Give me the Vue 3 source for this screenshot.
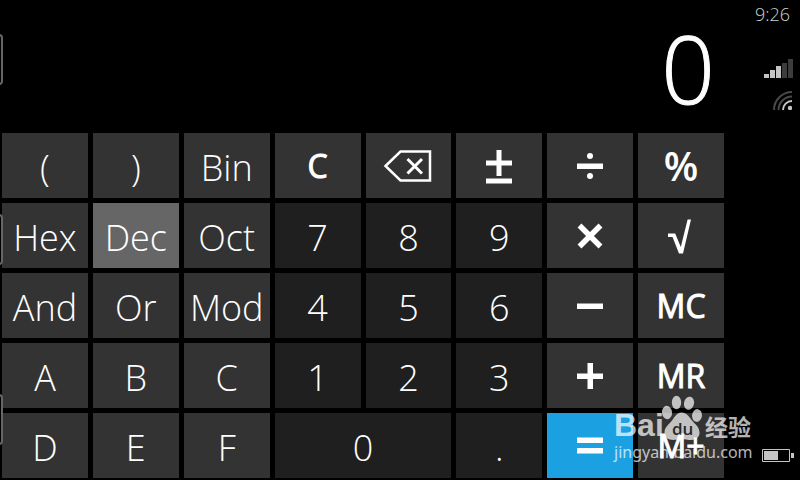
<script setup>
import { ref } from 'vue'

const mode = ref('Dec')
const display = ref('0')

const keys = [
  { t: '(' }, { t: ')' }, { t: 'Bin', mode: true }, { t: 'C', kind: 'strong', label: 'Clear' },
  { icon: 'back', label: 'Backspace' }, { icon: 'pm', label: 'Plus or minus' },
  { icon: 'div', label: 'Divide' }, { t: '%', kind: 'percent' },
  { t: 'Hex', mode: true }, { t: 'Dec', mode: true }, { t: 'Oct', mode: true },
  { t: '7', kind: 'digit' }, { t: '8', kind: 'digit' }, { t: '9', kind: 'digit' },
  { icon: 'mul', label: 'Multiply' }, { icon: 'sqrt', label: 'Square root' },
  { t: 'And' }, { t: 'Or' }, { t: 'Mod' },
  { t: '4', kind: 'digit' }, { t: '5', kind: 'digit' }, { t: '6', kind: 'digit' },
  { icon: 'minus', label: 'Subtract' }, { t: 'MC', kind: 'strong' },
  { t: 'A' }, { t: 'B' }, { t: 'C' },
  { t: '1', kind: 'digit' }, { t: '2', kind: 'digit' }, { t: '3', kind: 'digit' },
  { icon: 'plus', label: 'Add' }, { t: 'MR', kind: 'strong' },
  { t: 'D' }, { t: 'E' }, { t: 'F' },
  { t: '0', kind: 'digit', wide: true }, { t: '.', kind: 'digit' },
  { icon: 'eq', label: 'Equals', kind: 'equals' }, { t: 'M+', kind: 'strong' },
]

function press(key) {
  if (key.mode) mode.value = key.t
  else if (key.kind === 'digit') {
    display.value = display.value === '0' && key.t !== '.' ? key.t : display.value + key.t
  } else if (key.label === 'Clear') display.value = '0'
  else if (key.icon === 'back') display.value = display.value.slice(0, -1) || '0'
}
</script>

<template>
  <div class="phone">
    <main class="calc">
      <output class="display">{{ display }}</output>
      <div class="pad">
        <button
          v-for="(key, i) in keys"
          :key="i"
          type="button"
          class="key"
          :class="[key.kind, { wide: key.wide, active: key.mode && key.t === mode }]"
          :aria-label="key.label"
          @click="press(key)"
        >
          <svg v-if="key.icon" class="icon" viewBox="0 0 50 40" aria-hidden="true">
            <g v-if="key.icon === 'back'" fill="none" stroke="#fff">
              <path d="M2.5 20 17.5 5.5H47V34.500H17.500Z" stroke-width="2.500" />
              <path d="M24.500 13 39 27.500M39 13 24.500 27.500" stroke-width="3" />
            </g>
            <path v-else-if="key.icon === 'pm'" d="M22.500 4h5v10.500H38v5H27.500V30h-5V19.500H12v-5h10.500zM12 32.500h26v5H12z" fill="#fff" />
            <g v-else-if="key.icon === 'div'" fill="#fff">
              <path d="M12 17.500h26v5.500H12z" />
              <circle cx="25" cy="10" r="3" />
              <circle cx="25" cy="30" r="3" />
            </g>
            <path v-else-if="key.icon === 'mul'" d="M14.500 9.500 35.500 30.500M35.500 9.500 14.500 30.500" stroke="#fff" stroke-width="5.500" />
            <path v-else-if="key.icon === 'sqrt'" d="M12 17.500h7.200L24.800 31 31.600 3.500H35L27 37.500h-4L16.500 21H12z" fill="#fff" />
            <path v-else-if="key.icon === 'minus'" d="M12 17.500h26V23H12z" fill="#fff" />
            <path v-else-if="key.icon === 'plus'" d="M22.500 7h5.500v10.500h10V23H28v10h-5.500V23H12v-5.500h10.500z" fill="#fff" />
            <path v-else d="M12 11.500h26V17H12zM12 22h26v5.500H12z" fill="#fff" />
          </svg>
          <template v-else>{{ key.t }}</template>
        </button>
      </div>
    </main>

    <aside class="status">
      <time class="clock">9:26</time>
      <svg class="signal" viewBox="0 0 29 19" role="img" aria-label="Signal">
        <path d="M0 15h5v4H0zM6 11h5v8H6zM12 7h5v12h-5z" fill="#c4c4c4" />
        <path d="M18 4h5v15h-5zM24 0h5v19h-5z" fill="#3c3c3c" />
      </svg>
      <svg class="wifi" viewBox="0 0 19 19" role="img" aria-label="Wi-Fi">
        <g fill="none">
          <path d="M1 19A18 18 0 0 1 19 1M5.500 19A13.500 13.500 0 0 1 19 5.500" stroke="#4a4a4a" stroke-width="2" />
          <path d="M10 19A9 9 0 0 1 19 10" stroke="#c4c4c4" stroke-width="2" />
        </g>
        <circle cx="17" cy="17" r="2.200" fill="#c4c4c4" />
      </svg>
      <svg class="battery" viewBox="0 0 32 13" role="img" aria-label="Battery">
        <path d="M.5 .5h27v12H.5z" fill="none" stroke="#c4c4c4" />
        <path d="M2 2h14v9H2zM29 4h3v5h-3z" fill="#c4c4c4" />
      </svg>
    </aside>

    <div class="tabs" aria-hidden="true"><i></i><i></i><i></i></div>

    <div class="mark">
      <div class="brand">
        <span class="bai">Bai</span>
        <span class="paw">
          <svg viewBox="0 0 36 46" aria-hidden="true">
            <g fill="#fff">
              <ellipse cx="6" cy="17.500" rx="5" ry="6.700" transform="rotate(-6 6 17.500)" />
              <ellipse cx="15.500" cy="7.500" rx="4.700" ry="6.800" />
              <ellipse cx="28" cy="8.200" rx="5" ry="6.600" transform="rotate(12 28 8.200)" />
              <ellipse cx="36" cy="20.500" rx="5" ry="6.400" transform="rotate(6 36 20.500)" />
              <path d="M20.500 17.500C25.500 17.500 28.500 22 31 25.500 34.500 29.500 39 32.500 38.500 38.500 38 44.500 31 45.500 26.500 44.800 22 44.200 19 44.200 15 44.800 9 45.500 3.500 44 3.500 37.500 3.500 32 8 29.500 11 25.500 13.500 22 16 17.500 20.500 17.500Z" />
            </g>
          </svg>
          <b>du</b>
        </span>
        <span class="cn">经验</span>
      </div>
      <div class="url">jingyan.baidu.com</div>
    </div>
  </div>
</template>

<style>
body {
  background: #000;
}
</style>

<style scoped>
.phone {
  position: relative;
  display: flex;
  min-height: 100vh;
  overflow: hidden;
  background: #000;
  color: #fff;
  font-family: "Open Sans", "Noto Sans", sans-serif;
}
.calc {
  flex: 1;
  display: flex;
  flex-direction: column;
  padding: 0 0 2px 2px;
}
.display {
  flex: 1;
  padding: 4px 9px 0 0;
  text-align: right;
  font-size: 94px;
  line-height: 128px;
  font-weight: 300;
  -webkit-text-stroke: 1px #fff;
}
.pad {
  display: grid;
  grid-template-columns: repeat(8, minmax(0, 1fr));
  grid-auto-rows: 65px;
  gap: 5px;
}
.key {
  display: flex;
  align-items: center;
  justify-content: center;
  padding: 4px 0 0;
  border: 0;
  border-radius: 0;
  background: #333;
  color: #fff;
  font-family: inherit;
  font-size: 36px;
  line-height: 48px;
  font-weight: 300;
  white-space: nowrap;
}
.digit {
  background: #1f1f1f;
}
.active {
  background: #666;
}
.wide {
  grid-column: span 2;
}
.strong {
  padding: 0;
  font-size: 32px;
  font-weight: 400;
  -webkit-text-stroke: 1px #fff;
}
.percent {
  padding: 0;
  font-size: 40px;
  font-weight: 600;
}
.equals {
  background: #1ba1e2;
}
.icon {
  width: 50px;
  height: 40px;
  margin-bottom: 4px;
}
.status {
  display: flex;
  flex-direction: column;
  align-items: flex-end;
  width: 68px;
  padding: 0 8px 18px 0;
  box-sizing: content-box;
}
.clock {
  margin-right: 2px;
  color: #d0d0d0;
  font-size: 18px;
  line-height: 28px;
  font-weight: 300;
}
.signal {
  width: 29px;
  height: 19px;
  margin: 31px -1px 13px 0;
}
.wifi {
  width: 19px;
  height: 19px;
}
.battery {
  width: 32px;
  height: 13px;
  margin: auto -2px 0 0;
}
.tabs {
  position: absolute;
  top: 34px;
  left: -8px;
  display: flex;
  flex-direction: column;
  gap: 129px;
}
.tabs i {
  width: 11px;
  height: 51px;
  box-sizing: border-box;
  border: 2px solid #666;
  border-radius: 4px;
}
.mark {
  position: absolute;
  right: 45px;
  bottom: 17px;
  width: 141px;
  opacity: 0.7;
  pointer-events: none;
}
.brand {
  display: flex;
  align-items: flex-end;
  height: 46px;
}
.bai {
  width: 47px;
  font: bold 32px/32px "Liberation Sans", sans-serif;
}
.paw {
  position: relative;
  width: 44px;
  height: 46px;
}
.paw svg {
  display: block;
  width: 36px;
  height: 46px;
  overflow: visible;
}
.paw b {
  position: absolute;
  left: 11px;
  bottom: 1px;
  color: #222;
  font: 600 17px/22px "Open Sans", sans-serif;
}
.cn {
  font: bold 23px/30px "Noto Sans CJK SC", sans-serif;
  white-space: nowrap;
}
.url {
  font: 16px/22px "Noto Sans", sans-serif;
  white-space: nowrap;
}
</style>
